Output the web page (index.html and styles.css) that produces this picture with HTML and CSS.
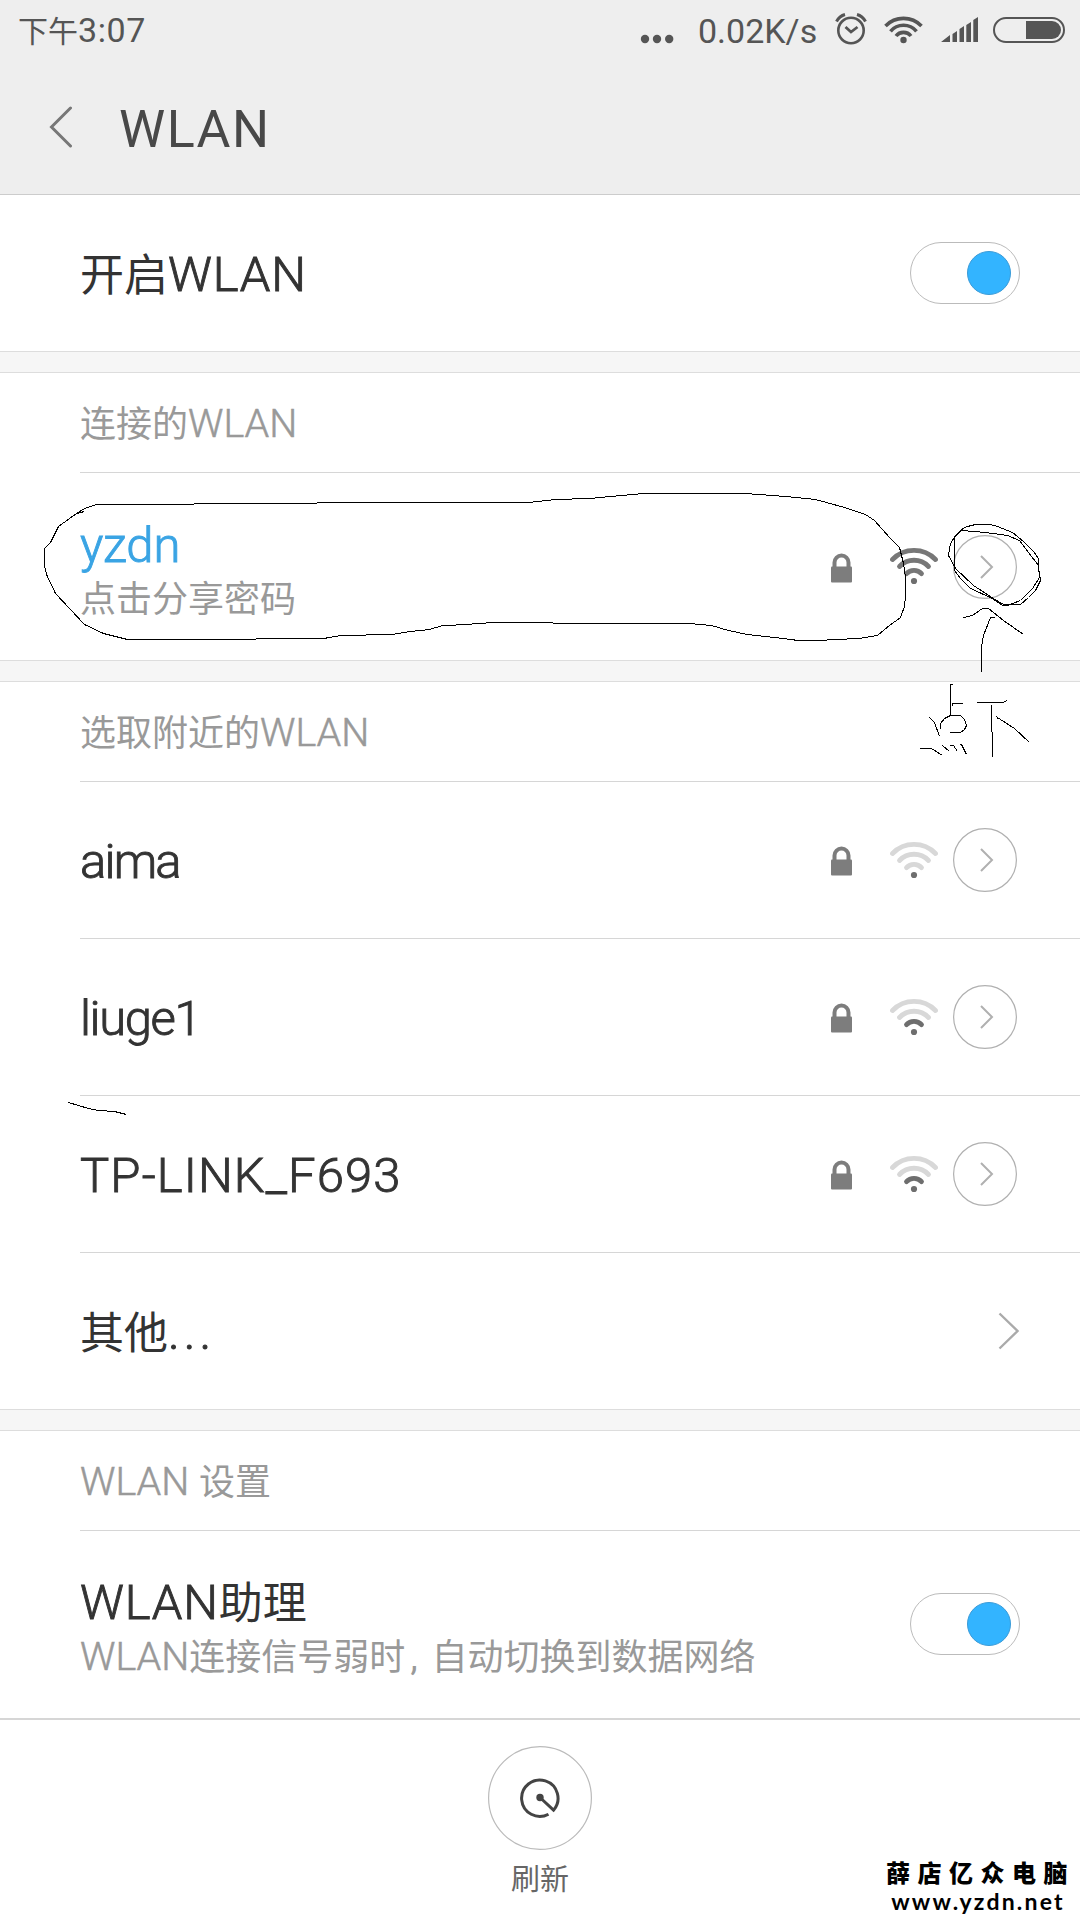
FILE: index.html
```html
<!DOCTYPE html>
<html lang="zh-CN">
<head>
<meta charset="utf-8" />
<title>WLAN</title>
<link rel="stylesheet" href="styles.css">
</head>
<body>

<svg class="defs" width="0" height="0">
	<symbol id="lock" viewBox="0 0 21 30">
		<path d="M3.500 14V9.500a7 7 0 0 1 14 0V14" fill="none" stroke="#7d7d7d" stroke-width="4"/>
		<rect y="13.500" width="21" height="16" rx="1" fill="#7d7d7d"/>
	</symbol>
	<symbol id="wifi" viewBox="0 0 48 37">
		<g fill="none" stroke-width="4.800" stroke-linecap="round">
			<path class="w3" d="M2.500 11.500A30 30 0 0 1 45.500 11.500"/>
			<path class="w2" d="M9.500 18.500A20 20 0 0 1 38.500 18.500"/>
			<path class="w1" d="M16.500 25.700A10 10 0 0 1 31.500 25.700"/>
		</g>
		<circle cx="24" cy="33" r="3.100" fill="#6e6e6e"/>
	</symbol>
	<symbol id="next" viewBox="0 0 64 64">
		<circle cx="32" cy="32" r="31.400" fill="none" stroke="#b0b0b0" stroke-width="1.200"/>
		<path d="M28 21L39 32L28 43" fill="none" stroke="#b0b0b0" stroke-width="2"/>
	</symbol>
</svg>

<header class="header">
	<div class="status">
		<span class="time">下午<b>3:07</b></span>
		<svg class="dots" width="34" height="10"><circle cx="5" cy="5" r="4.200"/><circle cx="17" cy="5" r="4.200"/><circle cx="29.200" cy="5" r="4.200"/></svg>
		<span class="speed">0.02K/s</span>
		<svg class="alarm" width="32" height="32" fill="none" stroke="#555" stroke-width="2.600">
			<circle cx="16" cy="17.500" r="12.700"/>
			<path d="M10.500 14L16 19L22.500 14" stroke-width="2.800"/>
			<path d="M1.500 8.500Q4.500 3 10 1.500M30.500 8.500Q27.500 3 22 1.500" stroke-width="3"/>
		</svg>
		<svg class="swifi" width="39" height="28" fill="none" stroke="#555" stroke-width="3.600">
			<path d="M1.500 10A25 25 0 0 1 37.500 10"/>
			<path d="M6.500 15.300A17 17 0 0 1 32.500 15.300"/>
			<path d="M12 20A9.500 9.500 0 0 1 27 20"/>
			<circle cx="19.500" cy="24" r="3.200" fill="#555" stroke="none"/>
		</svg>
		<svg class="signal" width="38" height="26" fill="#555">
			<path d="M0 25L9 18V25zM11.500 17L16 14V25H11.500zM18.500 12L23 9V25H18.500zM25.300 8L30 5V25H25.300zM32.300 3L37 0V25H32.300z"/>
		</svg>
		<div class="battery"><div class="level"></div></div>
	</div>
	<div class="title-bar">
		<svg width="24" height="42" fill="none" stroke="#777" stroke-width="3" stroke-linecap="round"><path d="M21.500 2L2.500 21L21.500 40"/></svg>
		<h1>WLAN</h1>
	</div>
</header>

<main>
	<section class="first">
		<div class="row full">
			<p class="name">开启<b>WLAN</b></p>
			<div class="toggle"></div>
		</div>
	</section>

	<section>
		<h2>连接的<b>WLAN</b></h2>
		<div class="row tall">
			<div class="label">
				<p class="name current"><b>yzdn</b></p>
				<p class="note">点击分享密码</p>
			</div>
			<svg class="lock"><use href="#lock"/></svg>
			<svg class="wifi s3"><use href="#wifi"/></svg>
			<svg class="next"><use href="#next"/></svg>
		</div>
	</section>

	<section>
		<h2>选取附近的<b>WLAN</b></h2>
		<div class="row">
			<p class="name aima"><b>aima</b></p>
			<svg class="lock"><use href="#lock"/></svg>
			<svg class="wifi"><use href="#wifi"/></svg>
			<svg class="next"><use href="#next"/></svg>
		</div>
		<div class="row">
			<p class="name liuge"><b>liuge1</b></p>
			<svg class="lock"><use href="#lock"/></svg>
			<svg class="wifi s1"><use href="#wifi"/></svg>
			<svg class="next"><use href="#next"/></svg>
		</div>
		<div class="row">
			<p class="name tp"><b>TP-LINK_F693</b></p>
			<svg class="lock"><use href="#lock"/></svg>
			<svg class="wifi s1"><use href="#wifi"/></svg>
			<svg class="next"><use href="#next"/></svg>
		</div>
		<div class="row last">
			<p class="name other">其他<b>...</b></p>
			<svg class="more" width="22" height="38" fill="none" stroke="#aaa" stroke-width="2.400"><path d="M1.500 1.500L19.500 19L1.500 36.500"/></svg>
		</div>
	</section>

	<section>
		<h2><b>WLAN </b>设置</h2>
		<div class="row assist">
			<div class="label">
				<p class="name"><b>WLAN</b>助理</p>
				<p class="note"><b>WLAN</b>连接信号弱时<i>,</i>自动切换到数据网络</p>
			</div>
			<div class="toggle"></div>
		</div>
	</section>
</main>

<footer>
	<svg width="104" height="104" fill="none">
		<circle cx="52" cy="52" r="51.400" stroke="#bbb" stroke-width="1.200"/>
		<path d="M60.500 68.200A18.200 18.200 0 1 1 65.500 64.200L52 51.500" stroke="#444" stroke-width="3"/>
		<circle cx="52" cy="51.500" r="3.700" fill="#444"/>
	</svg>
	<p>刷新</p>
	<div class="mark">
		<strong>薛店亿众电脑</strong>
		<span>www.yzdn.net</span>
	</div>
</footer>

<!-- pen strokes -->
<svg class="pen" width="1080" height="1920">
	<g transform="translate(.5 .5)">
		<path d="M84 511L76 513L84 508L96 504L193 504L194 503L316 503L317 502L528 502L555 499L589 498L621 495L643 493L745 493L785 496L815 499L844 507L865 514L874 520L889 537L899 547L903 563L905 577V595L904 606L900 617L889 625L877 635L858 638L836 639L817 640L798 640L774 637L747 634L728 630L711 625L689 623H564L540 622H497L474 623L469 624L442 625L429 629L410 631L391 634L341 635L323 638L256 638L255 639H127L103 633L84 624L55 593L46 574L44 565V548L50 542L58 526L76 513"/>
		<path d="M962 528L967 526L975 524H990L997 526L1012 532L1023 541L1033 551L1038 558V568L1040 580L1035 590L1028 597L1020 604H1003L993 598L973 585L955 568L948 555L950 543L955 535L963 528"/>
		<path d="M962 530L985 532L1007 535L1019 540L1028 552L1038 565L1039 577L1032 588L1020 600L1007 605L1002 605L992 598L970 588L960 578L954 570V537L962 528"/>
		<path d="M963 617L972 615L982 608H988L1003 620L1023 634M994 617H990L983 635L981 647V671"/>
		<path d="M952 684H950V715M962 703H952V705M940 728V723L944 718L950 715H960L964 719L966 725L964 729L960 732H949M929 717L934 722L939 736M919 748H931L942 755M942 745L949 751M949 745H953L957 751M959 744H961L966 754"/>
		<path d="M976 702H1002L1007 700M991 705L992 757M998 719L997 717L1014 728L1029 742"/>
		<path d="M68 1102L88 1108L98 1110L114 1111L126 1114"/>
	</g>
</svg>

</body>
</html>
```

FILE: styles.css
```css
*, ::after {box-sizing: border-box;}
body {
	position: relative;
	display: flex;
	flex-direction: column;
	width: 1080px;
	height: 1920px;
	margin: 0;
	overflow: hidden;
	background: #fff;
	color: #333;
	font-family: Roboto, "Noto Sans CJK SC", sans-serif;
}
h1, h2, p {margin: 0; font-weight: 400;}
b {font-weight: 400;}
i {font-style: normal;}
svg {display: block; flex: none;}
.defs {position: absolute;}

/* --------------------------------- */

.header {
	height: 195px;
	background: #eee;
	border-bottom: 1px solid #ccc;
}
.status {
	display: flex;
	height: 60px;
	padding: 0 15px 0 18px;
	align-items: center;
	color: #555;
	font-size: 30px;
	line-height: 62px;
}
.status b, .speed {font-size: 34px;}
.status b {letter-spacing: 0.600px;}
.time {flex: 1; padding-top: 2px;}
.dots {fill: #555; margin: 18px 24px 0 0;}
.speed {width: 122px; padding-top: 2px;}
.alarm {margin: -2px 17px 0 15px;}
.swifi {margin-right: 18px;}
.signal {margin-right: 14px;}
.battery {
	width: 72px;
	height: 26px;
	padding: 2px;
	border: 2px solid #555;
	border-radius: 13px;
}
.level {
	width: 35px;
	height: 18px;
	margin-left: auto;
	background: #555;
	border-radius: 0 9px 9px 0;
}
.title-bar {
	display: flex;
	align-items: center;
	height: 134px;
	padding-left: 49px;
	gap: 46px;
	color: #484848;
}
h1 {
	padding-top: 6px;
	font-size: 52px;
	line-height: 60px;
	letter-spacing: 1.500px;
}

/* --------------------------------- */

main {background: #f6f6f6;}
section {
	padding-left: 80px;
	border-top: 1px solid #ddd;
	margin-top: 20px;
	background: #fff;
}
section:not(:last-child) {border-bottom: 1px solid #ddd;}
section.first {
	margin: 0;
	border-top: 0;
}
h2 {
	height: 99px;
	color: #999;
	font-size: 36px;
	line-height: 102px;
}
h2 b, .note b {
	font-size: 39.500px;
	font-weight: 300;
	-webkit-text-stroke: 0.500px;
}
.row {
	display: flex;
	align-items: center;
	height: 157px;
	padding-right: 63px;
	border-top: 1px solid #d6d6d6;
}
.row.full {height: 156px; border: 0; padding-right: 60px;}
.row.tall {height: 188px;}
.row.last {padding-right: 60px;}
.row.assist {height: 188px; padding-right: 60px;}
.assist .toggle {margin-bottom: 2px;}
.label, .row > .name {flex: 1; padding-top: 5px;}
.name {
	font-size: 44px;
	line-height: 60px;
}
/* light face thickened a little, regular is too heavy here */
.name b {
	font-size: 49px;
	font-weight: 300;
	letter-spacing: 0.800px;
	-webkit-text-stroke: 0.900px;
}
.name.current b {letter-spacing: -0.200px;}
.aima b {letter-spacing: -1.800px;}
.liuge b {letter-spacing: -1.400px;}
.tp b {letter-spacing: 1.100px;}
.other b {letter-spacing: 4px;}
.current {color: #3aa4e4;}
.note {
	color: #999;
	font-size: 36px;
	line-height: 46px;
}
.note i {padding: 0 14px 0 5px;}

.lock {width: 21px; height: 30px; margin: 2px 38px 0 0;}
.wifi {
	--w1: #d8d8d8;
	--w2: #d8d8d8;
	--w3: #d8d8d8;
	width: 48px;
	height: 37px;
	margin-right: 15px;
}
.s1 {--w1: #6e6e6e;}
.s3 {--w1: #777; --w2: #777; --w3: #777;}
.w1 {stroke: var(--w1);}
.w2 {stroke: var(--w2);}
.w3 {stroke: var(--w3);}
.next {width: 64px; height: 64px;}

.toggle {
	width: 110px;
	height: 62px;
	padding: 8px;
	border: 1px solid #bbb;
	border-radius: 31px;
}
.toggle::after {
	content: "";
	display: block;
	width: 44px;
	height: 44px;
	margin-left: auto;
	border: 1px solid #3a9bd8;
	border-radius: 50%;
	background: #33b4ff;
}

/* --------------------------------- */

footer {
	position: relative;
	display: flex;
	flex-direction: column;
	align-items: center;
	height: 202px;
	padding-top: 26px;
	border-top: 2px solid #d6d6d6;
}
footer p {
	color: #666;
	font-size: 29px;
	line-height: 61px;
}
.mark {
	position: absolute;
	right: 10px;
	bottom: 5px;
	display: flex;
	flex-direction: column;
	align-items: center;
	color: #000;
}
.mark strong {
	font: 900 24px/24px "Noto Sans CJK SC", sans-serif;
	letter-spacing: 7.500px;
	margin: 0 -5px 3px 0;
}
.mark span {
	font: 700 23px/28px Lato, sans-serif;
	letter-spacing: 2.200px;
}

.pen {
	position: absolute;
	left: 0;
	top: 0;
	fill: none;
	stroke: #000;
	shape-rendering: crispEdges;
}
```
